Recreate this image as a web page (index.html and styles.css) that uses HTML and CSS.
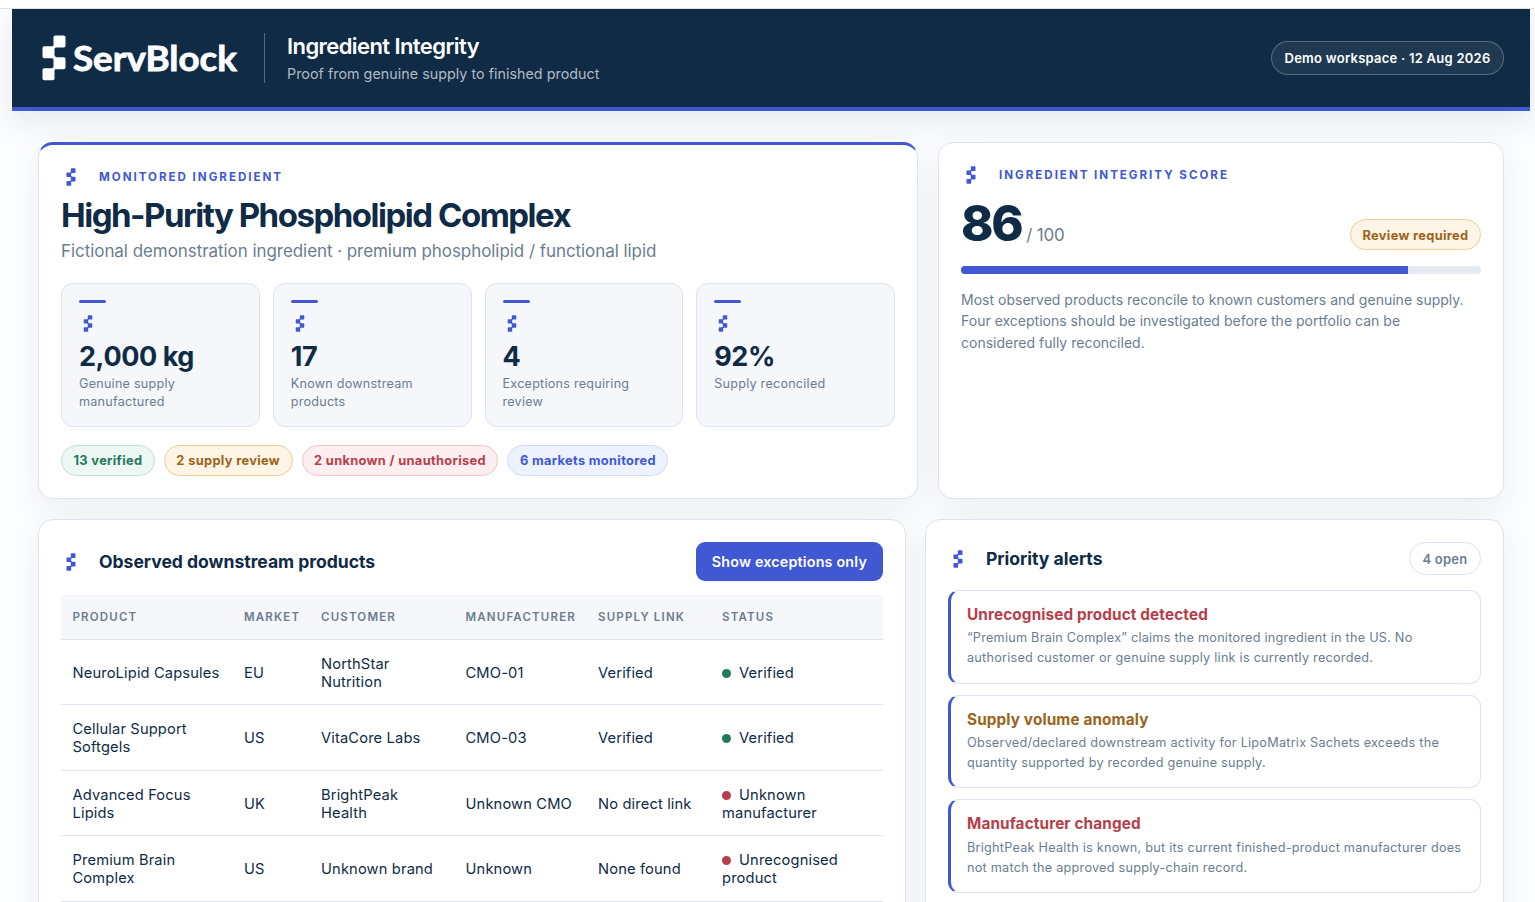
FILE: index.html
```html
<!DOCTYPE html>
<html lang="en">
<head>
    <meta charset="UTF-8">
    <meta name="viewport" content="width=device-width, initial-scale=1.0">
    <title>ServBlock Ingredient Integrity</title>
    <link rel="stylesheet" href="styles.css">
</head>
<body>
    <!-- ServBlock mark, reused in the cards -->
    <svg class="symbols" width="0" height="0">
        <symbol id="mark" viewBox="0 0 24 46">
            <rect x="11.5" y="0.5" width="12" height="12" rx="1.8"/>
            <rect x="0.5" y="11.3" width="12" height="12" rx="1.8"/>
            <rect x="11.5" y="22.2" width="12" height="12" rx="1.8"/>
            <rect x="0.5" y="33.2" width="12" height="12" rx="1.8"/>
            <path d="M9.5 12.5l3-3 2 2-3 3zM9.5 22l2-2 5 4-3 3zM9.5 34l3-3 2 2-3 3z"/>
        </symbol>
    </svg>

    <div class="app">
        <header class="topbar">
            <svg class="logo" width="198" height="48" viewBox="0 0 198 48">
                <use href="#mark" x="0" y="1" width="24" height="46"/>
                <text class="logo-text" x="31" y="37" textLength="164" lengthAdjust="spacingAndGlyphs">ServBlock</text>
            </svg>
            <div class="heading">
                <h1>Ingredient Integrity</h1>
                <p>Proof from genuine supply to finished product</p>
            </div>
            <span class="workspace">Demo workspace · 12 Aug 2026</span>
        </header>

        <main>
            <section class="row hero-row">
                <div class="card hero">
                    <div class="eyebrow"><svg class="mark"><use href="#mark"/></svg>Monitored ingredient</div>
                    <h2>High-Purity Phospholipid Complex</h2>
                    <p class="sub">Fictional demonstration ingredient · premium phospholipid / functional lipid</p>
                    <div class="metrics">
                        <div class="metric">
                            <svg class="mark"><use href="#mark"/></svg>
                            <strong>2,000 kg</strong>
                            <span>Genuine supply manufactured</span>
                        </div>
                        <div class="metric">
                            <svg class="mark"><use href="#mark"/></svg>
                            <strong>17</strong>
                            <span>Known downstream products</span>
                        </div>
                        <div class="metric">
                            <svg class="mark"><use href="#mark"/></svg>
                            <strong>4</strong>
                            <span>Exceptions requiring review</span>
                        </div>
                        <div class="metric">
                            <svg class="mark"><use href="#mark"/></svg>
                            <strong>92%</strong>
                            <span>Supply reconciled</span>
                        </div>
                    </div>
                    <div class="pills">
                        <span class="pill green">13 verified</span>
                        <span class="pill amber">2 supply review</span>
                        <span class="pill red">2 unknown / unauthorised</span>
                        <span class="pill blue">6 markets monitored</span>
                    </div>
                </div>

                <div class="card score-card">
                    <div class="eyebrow"><svg class="mark"><use href="#mark"/></svg>Ingredient integrity score</div>
                    <div class="score-line">
                        <div class="score"><strong>86</strong><span>/ 100</span></div>
                        <span class="pill amber">Review required</span>
                    </div>
                    <div class="progress"><div class="bar" style="width: 86%"></div></div>
                    <p>Most observed products reconcile to known customers and genuine supply. Four exceptions should be investigated before the portfolio can be considered fully reconciled.</p>
                </div>
            </section>

            <section class="row main-row">
                <div class="card products">
                    <div class="card-head">
                        <h3><svg class="mark"><use href="#mark"/></svg>Observed downstream products</h3>
                        <button type="button">Show exceptions only</button>
                    </div>
                    <table>
                        <colgroup>
                            <col class="c-product"><col class="c-market"><col class="c-customer">
                            <col class="c-maker"><col class="c-link"><col>
                        </colgroup>
                        <thead>
                            <tr><th>Product</th><th>Market</th><th>Customer</th><th>Manufacturer</th><th>Supply link</th><th>Status</th></tr>
                        </thead>
                        <tbody>
                            <tr>
                                <td>NeuroLipid Capsules</td><td>EU</td><td>NorthStar Nutrition</td><td>CMO-01</td><td>Verified</td>
                                <td><i class="dot ok"></i>Verified</td>
                            </tr>
                            <tr>
                                <td>Cellular Support Softgels</td><td>US</td><td>VitaCore Labs</td><td>CMO-03</td><td>Verified</td>
                                <td><i class="dot ok"></i>Verified</td>
                            </tr>
                            <tr>
                                <td>Advanced Focus Lipids</td><td>UK</td><td>BrightPeak Health</td><td>Unknown CMO</td><td>No direct link</td>
                                <td><i class="dot bad"></i>Unknown manufacturer</td>
                            </tr>
                            <tr>
                                <td>Premium Brain Complex</td><td>US</td><td>Unknown brand</td><td>Unknown</td><td>None found</td>
                                <td><i class="dot bad"></i>Unrecognised product</td>
                            </tr>
                        </tbody>
                    </table>
                </div>

                <div class="card alerts">
                    <div class="card-head">
                        <h3><svg class="mark"><use href="#mark"/></svg>Priority alerts</h3>
                        <span class="count">4 open</span>
                    </div>
                    <div class="alert">
                        <h4 class="danger">Unrecognised product detected</h4>
                        <p>“Premium Brain Complex” claims the monitored ingredient in the US. No authorised customer or genuine supply link is currently recorded.</p>
                    </div>
                    <div class="alert">
                        <h4 class="warn">Supply volume anomaly</h4>
                        <p>Observed/declared downstream activity for LipoMatrix Sachets exceeds the quantity supported by recorded genuine supply.</p>
                    </div>
                    <div class="alert">
                        <h4 class="danger">Manufacturer changed</h4>
                        <p>BrightPeak Health is known, but its current finished-product manufacturer does not match the approved supply-chain record.</p>
                    </div>
                </div>
            </section>
        </main>
    </div>
</body>
</html>
```
FILE: styles.css
```css
*{
    margin: 0;
    padding: 0;
    box-sizing: border-box;
}

body{
    height: 902px;
    overflow: hidden;
    padding-top: 8px;
    font-family: Inter, "Liberation Sans", Arial, sans-serif;
    color: #0f2b46;
    background-color: #fff;
}

.symbols{
    position: absolute;
}
.app{
    height: 894px;
    border-top: 1px solid #e0e1e4;
    padding: 0 5px 0 12px;
    background-color: #fcfdff;
    overflow: hidden;
}
.mark{
    fill: #4058d2;
    width: 10px;
    height: 18px;
    flex-shrink: 0;
}

/* header */
.topbar{
    display: flex;
    align-items: center;
    height: 102px;
    padding: 0 26px 0 30px;
    background-color: #102b46;
    border-bottom: 4px solid #4058d2;
    box-shadow: 0 10px 30px rgba(16, 43, 70, 0.1);
}
.logo{
    fill: #fff;
}
.logo-text{
    font-family: Lato, sans-serif;
    font-size: 34px;
    font-weight: 700;
    stroke: #fff;
    stroke-width: 0.8px;
}
.heading{
    margin-left: 24px;
    padding-left: 22px;
    height: 50px;
    border-left: 1px solid rgba(255, 255, 255, 0.3);
}
.heading h1{
    font-size: 22px;
    line-height: 26px;
    font-weight: 600;
    letter-spacing: -0.58px;
    color: #fff;
}
.heading p{
    margin-top: 6px;
    font-size: 14.3px;
    line-height: 18px;
    letter-spacing: 0.03px;
    color: #b0bac4;
}
.workspace{
    margin-left: auto;
    padding: 0 12.5px;
    border: 1px solid rgba(255, 255, 255, 0.25);
    border-radius: 20px;
    background-color: rgba(255, 255, 255, 0.07);
    color: #fff;
    font-size: 13px;
    line-height: 32px;
    font-weight: 600;
    letter-spacing: 0.25px;
}

/* layout */
main{
    padding: 31px 26px 0;
}
.row{
    display: grid;
    gap: 20px;
}
.hero-row{
    grid-template-columns: 880px 1fr;
    height: 357px;
}
.main-row{
    grid-template-columns: 868px 1fr;
    gap: 19px;
    margin-top: 20px;
}
.card{
    background-color: #fff;
    border: 1px solid #dce4ed;
    border-radius: 15px;
    padding: 22px;
    box-shadow: 0 10px 30px rgba(16, 43, 70, 0.07);
}
.hero{
    border-top: 3px solid #4058d2;
}
.eyebrow{
    display: flex;
    align-items: center;
    height: 20px;
    padding-left: 5px;
    font-size: 11.6px;
    font-weight: 700;
    letter-spacing: 1.97px;
    text-transform: uppercase;
    color: #4058d2;
}
.eyebrow .mark{
    margin-right: 23px;
}
.hero h2{
    margin-top: 7px;
    font-size: 33px;
    line-height: 42px;
    font-weight: 700;
    letter-spacing: -1.48px;
}
.sub{
    margin-top: 4px;
    font-size: 17px;
    line-height: 22px;
    letter-spacing: -0.06px;
    color: #6b7d90;
}

/* metrics */
.metrics{
    display: grid;
    grid-template-columns: repeat(4, 1fr);
    gap: 13px;
    margin-top: 21px;
}
.metric{
    display: flex;
    flex-direction: column;
    height: 144px;
    padding: 16px 17px;
    border: 1px solid #dce4ed;
    border-radius: 12px;
    background-color: #f5f7fb;
}
.metric::before{
    content: "";
    flex-shrink: 0;
    width: 27px;
    height: 3px;
    border-radius: 2px;
    background-color: #4058d2;
}
.metric .mark{
    margin: 12px 0 0 4px;
    height: 17px;
}
.metric strong{
    margin-top: 8px;
    font-size: 27px;
    line-height: 34px;
    letter-spacing: -0.42px;
}
.metric span{
    margin-top: 1px;
    font-size: 12.6px;
    line-height: 18px;
    letter-spacing: 0.24px;
    color: #6b7d90;
}

.pills{
    display: flex;
    gap: 9px;
    margin-top: 18px;
}
.pill{
    padding: 0 11.5px;
    border: 1px solid;
    border-radius: 16px;
    font-size: 12.8px;
    line-height: 29px;
    font-weight: 700;
    letter-spacing: 0.35px;
    white-space: nowrap;
}
.green{ color: #24795b; background-color: #edf7f4; border-color: #bfe0d3; }
.amber{ color: #9a641b; background-color: #fff5e6; border-color: #edcf94; }
.red{ color: #b73e4a; background-color: #fdeeef; border-color: #f0c3c9; }
.blue{ color: #4058d2; background-color: #eef1ff; border-color: #d3daf8; }

/* score */
.score-line{
    display: flex;
    justify-content: space-between;
    align-items: flex-end;
    height: 65px;
}
.score{
    display: flex;
    align-items: baseline;
}
.score strong{
    font-size: 49px;
    line-height: 53px;
    font-weight: 800;
    letter-spacing: -2.3px;
}
.score span{
    margin-left: 5px;
    font-size: 17px;
    letter-spacing: -0.2px;
    color: #6b7d90;
}
.score-line .pill{
    padding-top: 2px;
    line-height: 27px;
}
.progress{
    height: 8px;
    margin-top: 16px;
    border-radius: 4px;
    background-color: #e6ebf1;
    overflow: hidden;
}
.bar{
    height: 8px;
    background-color: #4058d2;
}
.score-card p{
    margin-top: 15px;
    padding-right: 10px;
    font-size: 14px;
    line-height: 21.4px;
    letter-spacing: 0.01px;
    color: #6b7d90;
}

/* products table */
.card-head{
    display: flex;
    justify-content: space-between;
    align-items: center;
}
.card-head h3{
    display: flex;
    align-items: center;
    padding-left: 5px;
    font-size: 17.6px;
    font-weight: 700;
    letter-spacing: -0.04px;
}
.card-head .mark{
    margin-right: 23px;
}
button{
    height: 39px;
    padding: 0 16px;
    border: none;
    border-radius: 9px;
    background-color: #4058d2;
    color: #fff;
    font-family: inherit;
    font-size: 14.3px;
    font-weight: 600;
    letter-spacing: 0.2px;
    cursor: pointer;
}
button:hover{
    background-color: #3449b8;
}
table{
    width: 822px;
    margin-top: 14px;
    table-layout: fixed;
    border-collapse: separate;
    border-spacing: 0;
}
.c-product{ width: 171.5px; }
.c-market{ width: 77px; }
.c-customer{ width: 144.5px; }
.c-maker{ width: 132.5px; }
.c-link{ width: 124px; }
th{
    height: 45px;
    padding: 0 0 1px 11.5px;
    background-color: #f5f7fb;
    border-bottom: 1px solid #dce4ed;
    font-size: 11.5px;
    font-weight: 600;
    letter-spacing: 1.18px;
    text-align: left;
    text-transform: uppercase;
    color: #6b7d90;
}
td{
    height: 65.7px;
    padding: 1px 11px 0 11.5px;
    border-bottom: 1px solid #dce4ed;
    font-size: 14.7px;
    line-height: 18px;
    letter-spacing: 0.14px;
    vertical-align: middle;
}
tbody tr:first-child td{
    height: 65px;
}
.dot{
    display: inline-block;
    width: 9px;
    height: 9px;
    margin-right: 8px;
    border-radius: 50%;
}
.ok{ background-color: #24795b; }
.bad{ background-color: #b73e4a; }

/* alerts */
.alerts .card-head{
    margin-bottom: 15px;
}
.count{
    padding: 1px 12.5px 0;
    border: 1px solid #dce4ed;
    border-radius: 17px;
    font-size: 13px;
    line-height: 30px;
    font-weight: 600;
    letter-spacing: 0.25px;
    color: #6b7d90;
}
.alert{
    height: 93.5px;
    margin-bottom: 11.1px;
    padding: 14px 16px;
    border: 1px solid #dce4ed;
    border-left: 3px solid #4058d2;
    border-radius: 11px;
}
.alert h4{
    font-size: 15.3px;
    line-height: 20px;
    font-weight: 700;
    letter-spacing: 0.13px;
}
.alert p{
    margin-top: 3.4px;
    font-size: 12.7px;
    line-height: 20px;
    letter-spacing: 0.23px;
    color: #6b7d90;
}
.danger{ color: #b73e4a; }
.warn{ color: #9a641b; }
```
